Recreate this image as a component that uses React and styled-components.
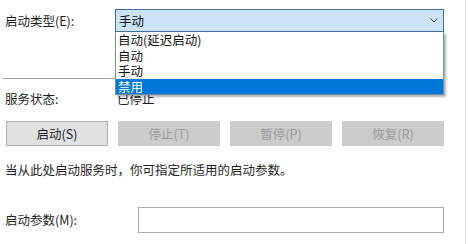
import React from "react"
import styled, { createGlobalStyle } from 'styled-components'

const GlobalStyle = createGlobalStyle`
    html, body {
        margin: 0;
        padding: 0;
        background: #ffffff;
    }
    body {
        font-family: "Noto Sans CJK SC", "Noto Sans", "Liberation Sans", sans-serif;
        font-size: 12.5px;
        color: #1e1e1e;
    }
`

const opciones = ['自动(延迟启动)', '自动', '手动', '禁用']
const botones = [
    { texto: '启动(S)', activo: true },
    { texto: '停止(T)', activo: false },
    { texto: '暂停(P)', activo: false },
    { texto: '恢复(R)', activo: false },
]

export default function App() {
    return (
        <>
            <GlobalStyle />
            <Page>
                <Row>
                    <Label>启动类型(E):</Label>
                    <ComboWrap>
                        <Combo>
                            <span>手动</span>
                            <svg width="8" height="5" viewBox="0 0 8 5">
                                <path d="M0.5 0.5 L4 4 L7.5 0.5" fill="none" stroke="#444" strokeWidth="1" />
                            </svg>
                        </Combo>
                        <ListBox>
                            {opciones.map((op) => (
                                <Option key={op} $selected={op === '禁用'}>{op}</Option>
                            ))}
                        </ListBox>
                    </ComboWrap>
                </Row>

                <Separator />

                <StatusRow>
                    <Label>服务状态:</Label>
                    <Value>已停止</Value>
                </StatusRow>

                <Buttons>
                    {botones.map((b) => (
                        <Button key={b.texto} disabled={!b.activo} $activo={b.activo}>{b.texto}</Button>
                    ))}
                </Buttons>

                <Description>当从此处启动服务时，你可指定所适用的启动参数。</Description>

                <ParamsRow>
                    <Label>启动参数(M):</Label>
                    <Input />
                </ParamsRow>
            </Page>
        </>
    )
}

const Page = styled.div`
    width: 466px;
    height: 244px;
    box-sizing: border-box;
    border-right: 1px solid #e3e3e3;
    padding: 9px 0 0 5px;
    display: flex;
    flex-direction: column;
    overflow: hidden;
`

const Row = styled.div`
    display: flex;
    align-items: center;
    height: 23px;
    position: relative;
    z-index: 2;
`

const Label = styled.div`
    width: 110px;
    flex-shrink: 0;
    line-height: 14px;
    color: #1e1e1e;
`

const ComboWrap = styled.div`
    position: relative;
    width: 329px;
    height: 23px;
`

const Combo = styled.div`
    box-sizing: border-box;
    height: 23px;
    background: #cce4f7;
    border: 1px solid #3f6f9f;
    display: flex;
    align-items: center;
    justify-content: space-between;
    padding: 0 5px 0 3px;
    color: #111;
`

const ListBox = styled.div`
    position: absolute;
    top: 23px;
    left: 0;
    width: 329px;
    box-sizing: border-box;
    background: #ffffff;
    border: 1px solid #6f8fad;
    border-top: none;
    box-shadow: 2px 2px 2px rgba(0, 0, 0, 0.3);
`

const Option = styled.div`
    height: 15.5px;
    line-height: 15.5px;
    padding-left: 2px;
    background: ${({ $selected }) => ($selected ? '#0078d7' : 'transparent')};
    color: ${({ $selected }) => ($selected ? '#ffffff' : '#111')};
`

const Separator = styled.div`
    margin-top: 46px;
    margin-left: -2px;
    width: 440px;
    height: 1px;
    background: #a0a0a0;
`

const StatusRow = styled.div`
    display: flex;
    align-items: center;
    margin-top: 13px;
    height: 14px;
`

const Value = styled.div`
    line-height: 14px;
    padding-left: 2px;
    color: #1e1e1e;
`

const Buttons = styled.div`
    display: grid;
    grid-template-columns: repeat(4, 1fr);
    column-gap: 10px;
    width: 438px;
    margin-top: 15px;
    margin-left: 1px;
`

const Button = styled.button`
    height: 25px;
    box-sizing: border-box;
    font-family: inherit;
    font-size: 12.5px;
    padding: 0;
    border: 1px solid ${({ $activo }) => ($activo ? '#adadad' : '#cccccc')};
    color: ${({ $activo }) => ($activo ? '#1e1e1e' : '#9a9a9a')};
    background: ${({ $activo }) => ($activo ? '#e1e1e1' : '#cccccc')};
`

const Description = styled.div`
    margin-top: 17px;
    line-height: 14px;
    color: #1e1e1e;
`

const ParamsRow = styled.div`
    display: flex;
    align-items: center;
    margin-top: 30px;
`

const Input = styled.input`
    box-sizing: border-box;
    width: 306px;
    height: 26px;
    margin-left: 23px;
    border: 1px solid #a8a8a8;
    background: #ffffff;
    outline: none;
`
